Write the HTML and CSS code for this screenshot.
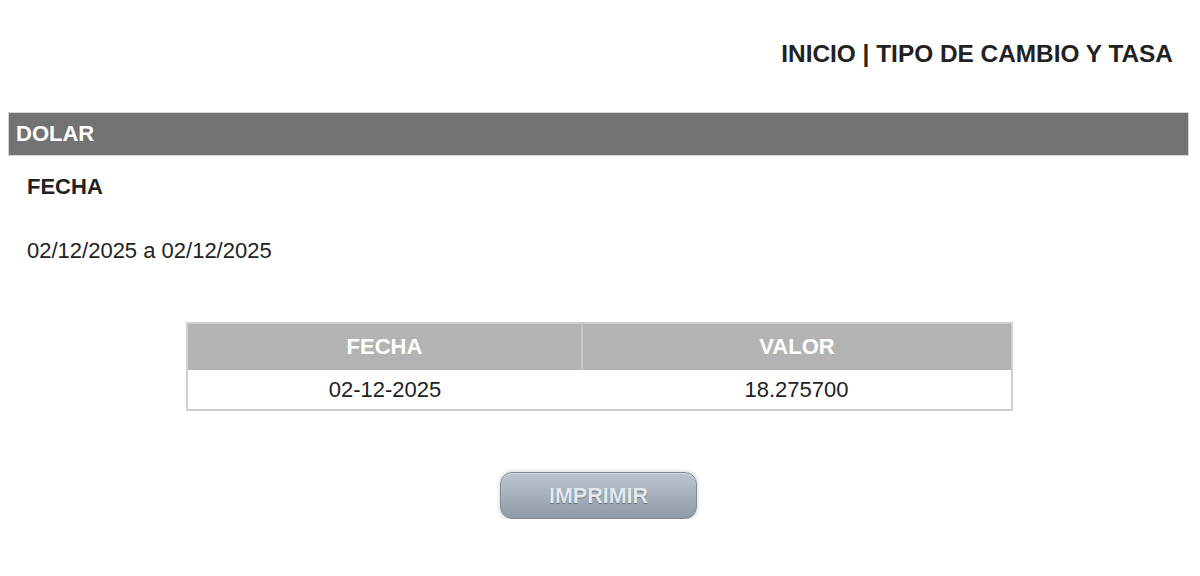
FILE: index.html
```html
<!DOCTYPE html>
<html lang="es">
<head>
<meta charset="utf-8">
<title>Tipo de cambio y tasa</title>
<link rel="stylesheet" href="styles.css">
</head>
<body>
  <header class="crumbs">
    <span>INICIO</span> | <span>TIPO DE CAMBIO Y TASA</span>
  </header>

  <section class="panel">
    <h2 class="panel-title">DOLAR</h2>
    <h3 class="field-label">FECHA</h3>
    <p class="field-value">02/12/2025 a 02/12/2025</p>

    <table class="rates">
      <colgroup>
        <col class="col-date">
        <col class="col-value">
      </colgroup>
      <thead>
        <tr><th>FECHA</th><th>VALOR</th></tr>
      </thead>
      <tbody>
        <tr><td>02-12-2025</td><td>18.275700</td></tr>
      </tbody>
    </table>

    <div class="actions">
      <button class="print-btn" type="button">IMPRIMIR</button>
    </div>
  </section>
</body>
</html>
```
FILE: styles.css
```css
html, body {
  background: #ffffff;
}

body {
  margin: 8px;
  font-family: "Liberation Sans", Arial, sans-serif;
  color: #222222;
}

.crumbs {
  height: 104px;
  box-sizing: border-box;
  padding: 32px 19px 0 0;
  text-align: right;
  font-size: 24.4px;
  font-weight: bold;
  line-height: 28px;
  color: #222222;
}

.panel-title {
  margin: 0 3px 0 0;
  height: 44px;
  box-sizing: border-box;
  border: 1px solid #d4d4d4;
  background: #737373;
  color: #ffffff;
  font-size: 22px;
  font-weight: bold;
  line-height: 42px;
  padding-left: 7px;
}

.field-label {
  margin: 18px 0 0 19px;
  font-size: 22px;
  font-weight: bold;
  line-height: 26px;
}

.field-value {
  margin: 38px 0 0 19px;
  font-size: 22px;
  line-height: 26px;
}

.rates {
  margin: 58px 0 0 178px;
  width: 825px;
  border-collapse: collapse;
  table-layout: fixed;
  border: 2px solid #cfcfcf;
  font-size: 22px;
}

.col-date { width: 395px; }
.col-value { width: 430px; }

.rates th {
  height: 46px;
  padding: 0;
  background: #b3b3b3;
  color: #ffffff;
  font-weight: bold;
  border-left: 2px solid #c6c6c6;
}

.rates th:first-child {
  border-left: 0;
}

.rates td {
  height: 39px;
  padding: 0;
  text-align: center;
  color: #222222;
  background: #ffffff;
}

.actions {
  display: flex;
  justify-content: center;
  margin-top: 61px;
}

.print-btn {
  width: 197px;
  height: 47px;
  margin-right: 3px;
  padding: 2px 0 0;
  border: 1px solid #7f8a96;
  border-radius: 12px;
  background: linear-gradient(#bcc5ce, #a4aeb9 55%, #8f9aa6);
  box-shadow: 0 0 3px 2px #e6e8ea, inset 0 1px 0 #d3dae1;
  font-family: "Liberation Sans", Arial, sans-serif;
  font-size: 21.5px;
  font-weight: bold;
  color: #e4e8ec;
  text-shadow: 0 1px 1px #5f6973;
  cursor: pointer;
}
```
